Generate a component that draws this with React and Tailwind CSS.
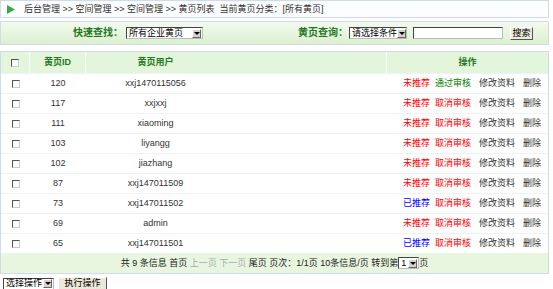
import React from "react";

const rows = [
  ["120", "xxj1470115056", false, "通过审核"],
  ["117", "xxjxxj", false, "取消审核"],
  ["111", "xiaoming", false, "取消审核"],
  ["103", "liyangg", false, "取消审核"],
  ["102", "jiazhang", false, "取消审核"],
  ["87", "xxj147011509", false, "取消审核"],
  ["73", "xxj147011502", true, "取消审核"],
  ["69", "admin", false, "取消审核"],
  ["65", "xxj147011501", true, "取消审核"],
];

function Check() {
  return (
    <span className="inline-block w-[8px] h-[8px] bg-white border border-t-[#555] border-l-[#555] border-b-[#ccc] border-r-[#ccc]" />
  );
}

function Arrow() {
  return (
    <span className="flex shrink-0 items-center justify-center w-[9px] h-[9px] bg-[#d6d3ce] border border-t-white border-l-white border-b-[#666] border-r-[#666]">
      <span className="block w-0 h-0 border-l-[3px] border-r-[3px] border-t-[3px] border-l-transparent border-r-transparent border-t-black" />
    </span>
  );
}

function Select({ label, w }) {
  return (
    <span className={`flex items-center justify-between h-[12px] ${w} bg-white border border-t-[#444] border-l-[#444] border-b-[#bbb] border-r-[#bbb] pl-[2px] pr-[1px] text-[9px] leading-none text-black whitespace-nowrap`}>
      <span>{label}</span>
      <Arrow />
    </span>
  );
}

export default function App() {
  return (
    <div className="w-[553px] h-[289px] bg-white text-[9px] leading-none text-[#333]" style={{ fontFamily: '"Liberation Sans", "Noto Sans CJK SC", sans-serif' }}>
      <div className="w-[549px]">
        {/* breadcrumb */}
        <div className="h-[18px] border border-[#cfdbe6] bg-[#fcfdfe] flex items-center">
          <svg width="8" height="9" viewBox="0 0 8 9" className="ml-[6px]">
            <polygon points="0,0 8,4.5 0,9" fill="#3aa84a" />
          </svg>
          <span className="ml-[9px] whitespace-pre">后台管理 &gt;&gt; 空间管理 &gt;&gt; 空间管理 &gt;&gt; 黄页列表  当前黄页分类：[所有黄页]</span>
        </div>

        {/* search bar */}
        <div className="mt-[3px] h-[24px] border border-[#cfdbe6] bg-gradient-to-b from-[#f3faee] to-[#dcf0d1] flex items-center whitespace-nowrap">
          <span className="ml-[72px] font-bold text-[#1f7a1f] text-[10px]">快速查找：</span>
          <span className="ml-[3px]"><Select label="所有企业黄页" w="w-[77px]" /></span>
          <span className="ml-[95px] font-bold text-[#1f7a1f] text-[10px]">黄页查询：</span>
          <span className="ml-[1px]"><Select label="请选择条件" w="w-[58px]" /></span>
          <span className="ml-[6px] h-[12px] w-[90px] bg-white border border-t-[#444] border-l-[#444] border-b-[#bbb] border-r-[#bbb]" />
          <span className="ml-[7px] h-[13px] w-[23px] flex items-center justify-center bg-[#ece9d8] border border-t-white border-l-white border-b-[#555] border-r-[#555] text-black">搜索</span>
        </div>

        {/* table */}
        <div className="mt-[6px] border border-[#cfdbe6]">
          <div className="grid grid-cols-[29px_56px_139px_162px_1fr] h-[21px] bg-[#e3f5da] items-stretch font-bold text-[#1f7a1f]">
            <div className="flex items-center justify-center border-r border-white"><Check /></div>
            <div className="flex items-center justify-center border-r border-white">黄页ID</div>
            <div className="flex items-center justify-center">黄页用户</div>
            <div className="border-r border-white" />
            <div className="flex items-center justify-center">操作</div>
          </div>
          {rows.map(([id, name, rec, audit]) => (
            <div key={id} className="grid grid-cols-[29px_56px_139px_162px_1fr] h-[20px] items-center border-t border-[#eef2f5]">
              <div className="flex justify-center"><Check /></div>
              <div className="text-center">{id}</div>
              <div className="text-center">{name}</div>
              <div />
              <div className="flex items-center pl-[16px] gap-[5px]">
                <span className={rec ? "text-[#0000ff]" : "text-[#ff0000]"}>{rec ? "已推荐" : "未推荐"}</span>
                <span className={audit === "通过审核" ? "text-[#008000]" : "text-[#ff0000]"}>{audit}</span>
                <span className="ml-[3px]">修改资料</span>
                <span className="ml-[3px]">删除</span>
              </div>
            </div>
          ))}
          <div className="h-[20px] bg-[#e8f6e0] flex items-center justify-center whitespace-pre text-[#222]">
            <span>共 9 条信息 首页 <span className="text-[#aaa]">上一页 下一页</span> 尾页 页次：1/1页 10条信息/页 转到第</span>
            <span className="flex items-center h-[12px] w-[21px] bg-white border border-t-[#444] border-l-[#444] border-b-[#bbb] border-r-[#bbb] pl-[2px] pr-[1px] justify-between text-black">
              <span>1</span>
              <Arrow />
            </span>
            <span>页</span>
          </div>
        </div>

        {/* bottom actions */}
        <div className="mt-[3px] flex items-center">
          <span className="ml-[3px]"><Select label="选择操作" w="w-[51px]" /></span>
          <span className="ml-[4px] h-[13px] w-[49px] flex items-center justify-center bg-[#ece9d8] border border-t-white border-l-white border-b-[#555] border-r-[#555] text-black">执行操作</span>
        </div>
      </div>
    </div>
  );
}
